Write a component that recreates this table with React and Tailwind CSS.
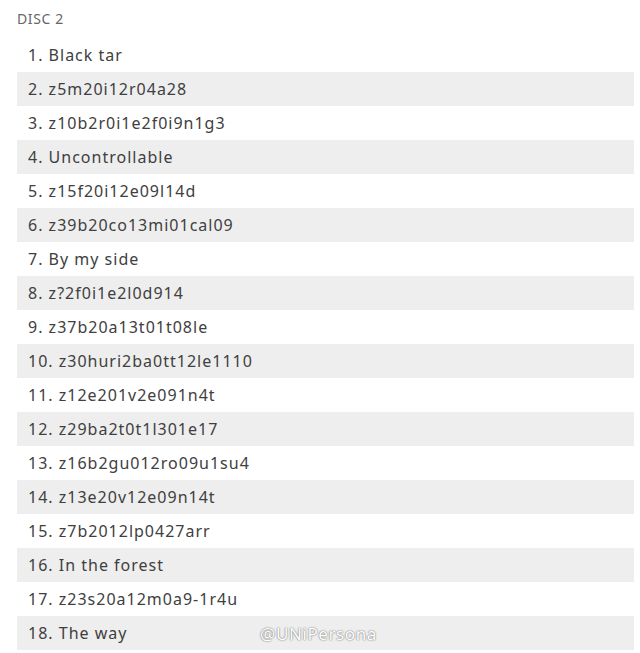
import React from "react";

const tracks = [
  "Black tar",
  "z5m20i12r04a28",
  "z10b2r0i1e2f0i9n1g3",
  "Uncontrollable",
  "z15f20i12e09l14d",
  "z39b20co13mi01cal09",
  "By my side",
  "z?2f0i1e2l0d914",
  "z37b20a13t01t08le",
  "z30huri2ba0tt12le1110",
  "z12e201v2e091n4t",
  "z29ba2t0t1l301e17",
  "z16b2gu012ro09u1su4",
  "z13e20v12e09n14t",
  "z7b2012lp0427arr",
  "In the forest",
  "z23s20a12m0a9-1r4u",
  "The way",
];

const App = () => {
  return (
    <div className="w-[640px] h-[653px] bg-white font-['Noto_Sans',sans-serif] overflow-hidden">
      {/* Disc label */}
      <div className="pl-[17px] pt-[8px] h-[38px] text-[14px] text-[#666] tracking-[0.6px]">DISC 2</div>

      {/* Track list */}
      <div className="ml-[17px] w-[617px]">
        {tracks.map((t, i) => (
          <div
            key={i}
            className={`relative h-[34px] flex items-center pl-[11px] text-[16px] text-[#404040] tracking-[1px] ${
              i % 2 === 1 ? "bg-[#eeeeee]" : "bg-white"
            }`}
          >
            {i + 1}. {t}
            {i === 17 && (
              <span className="absolute left-[243px] top-[5px] text-[17px] text-white tracking-[0.6px] [text-shadow:0_0_1px_#777,0_0_2px_#888]">
                @UNiPersona
              </span>
            )}
          </div>
        ))}
      </div>
    </div>
  );
};

export default App;
